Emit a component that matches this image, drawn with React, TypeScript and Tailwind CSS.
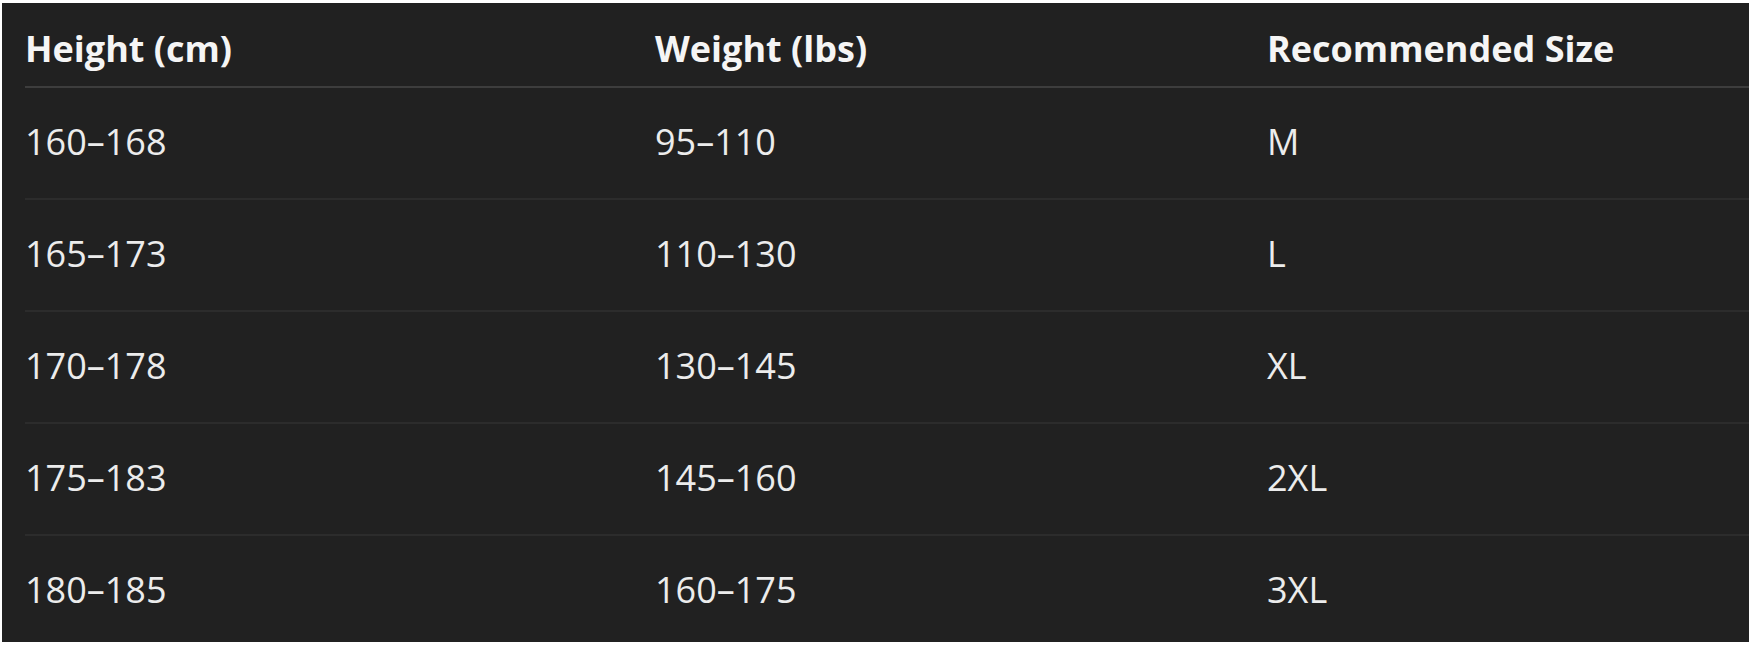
const headers = ['Height (cm)', 'Weight (lbs)', 'Recommended Size']

const rows = [
  ['160–168', '95–110', 'M'],
  ['165–173', '110–130', 'L'],
  ['170–178', '130–145', 'XL'],
  ['175–183', '145–160', '2XL'],
  ['180–185', '160–175', '3XL'],
]

export default function App() {
  return (
    <div className="h-[645px] w-[1752px] bg-white pl-[2px] pt-[3px]">
      <div
        className="h-[639px] w-[1747px] overflow-hidden bg-[#212121] pl-[23px] text-[36px] text-[#ececec]"
        style={{ fontFamily: '"Open Sans", "Noto Sans", sans-serif' }}
      >
        <div className="grid h-[85px] grid-cols-[630px_612px_1fr] items-center border-b-2 border-[#3d3d3d] pt-[8px] font-bold text-[#f5f5f5]">
          {headers.map((h) => (
            <div key={h}>{h}</div>
          ))}
        </div>

        {rows.map((row, i) => (
          <div
            key={i}
            className="grid h-[112px] grid-cols-[630px_612px_1fr] items-center border-b-2 border-[#2c2c2c] pb-[2px]"
          >
            {row.map((cell, j) => (
              <div key={j}>{cell}</div>
            ))}
          </div>
        ))}
      </div>
    </div>
  )
}
